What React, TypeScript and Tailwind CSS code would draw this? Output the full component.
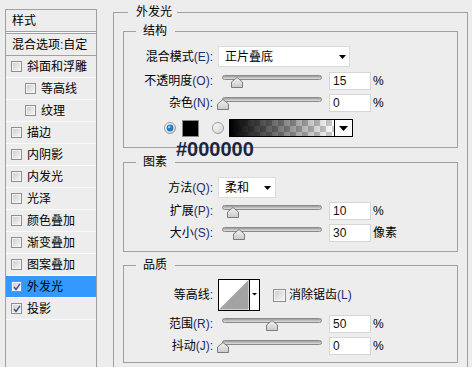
import React from "react";

function Check({ checked }: { checked?: boolean }) {
  return (
    <span className="relative flex h-[11px] w-[11px] shrink-0 border border-[#8f8f8f] bg-[#f4f4f4]">
      <span className="m-[1px] flex-1 bg-gradient-to-br from-[#cfcfcf] to-[#f4f4f4]" />
      {checked && (
        <svg className="absolute left-[1px] top-[1px]" width="8" height="8" viewBox="0 0 8 8">
          <path d="M1 3.8 L3 6.5 L7 0.8" fill="none" stroke="#3a4c9a" strokeWidth="1.4" />
        </svg>
      )}
    </span>
  );
}

function Thumb({ x }: { x: number }) {
  return (
    <svg className="absolute top-[5px]" style={{ left: x - 6 }} width="12" height="11" viewBox="0 0 12 11">
      <defs>
        <linearGradient id="tg" x1="0" y1="0" x2="0" y2="1">
          <stop offset="0" stopColor="#f4f4f4" />
          <stop offset="1" stopColor="#c9c9c9" />
        </linearGradient>
      </defs>
      <path d="M6 0.5 L11.5 5 V10.5 H0.5 V5 Z" fill="url(#tg)" stroke="#7c7c7c" />
    </svg>
  );
}

function Slider({ x }: { x: number }) {
  return (
    <div className="relative h-full w-[107px] shrink-0">
      <div className="ml-[4px] mt-[3px] h-[5px] w-[100px] rounded-full border border-[#8a8a8a] bg-gradient-to-b from-[#9c9c9c] to-[#e0e0e0]" />
      <Thumb x={x} />
    </div>
  );
}

function Input({ v }: { v: string }) {
  return (
    <div className="ml-[4px] flex h-[18px] w-[42px] shrink-0 items-center border border-[#d6d6d6] bg-white pl-[3px] text-[#111]">
      {v}
    </div>
  );
}

function Label({ cn, en }: { cn: string; en?: string }) {
  return (
    <div className="w-[89px] shrink-0 text-right text-black">
      {cn}
      <span className="text-[#1e2c70]">{en ? `(${en}):` : ":"}</span>
    </div>
  );
}

function Arrow() {
  return (
    <svg width="7" height="4" viewBox="0 0 7 4">
      <path d="M0 0 H7 L3.5 4 Z" fill="#000" />
    </svg>
  );
}

function SliderRow({ cn, en, x, v, unit, cls }: { cn: string; en: string; x: number; v: string; unit: string; cls: string }) {
  return (
    <div className={cls}>
      <Label cn={cn} en={en} />
      <div className="ml-[5px] flex h-full items-center">
        <Slider x={x} />
        <Input v={v} />
        <span className="ml-[2px]">{unit}</span>
      </div>
    </div>
  );
}

function Radio({ on }: { on?: boolean }) {
  return (
    <svg width="12" height="12" viewBox="0 0 12 12" className="shrink-0">
      <defs>
        <linearGradient id="rg" x1="0" y1="0" x2="1" y2="1">
          <stop offset="0" stopColor="#ffffff" />
          <stop offset="1" stopColor="#cfcfcf" />
        </linearGradient>
      </defs>
      <circle cx="6" cy="6" r="5.5" fill="url(#rg)" stroke="#9a9a9a" />
      {on && (
        <>
          <circle cx="6" cy="6" r="3.4" fill="#1f7cc4" />
          <circle cx="5.2" cy="5" r="1.3" fill="#8fd0ff" />
        </>
      )}
    </svg>
  );
}

function GradientBox() {
  return (
    <div className="ml-[5px] flex h-[18px] w-[124px] shrink-0 border border-black bg-white">
      <svg width="104" height="16" viewBox="0 0 104 16" className="shrink-0">
        <defs>
          <pattern id="cb" width="12" height="12" patternUnits="userSpaceOnUse">
            <rect width="12" height="12" fill="#ffffff" />
            <rect width="6" height="6" fill="#cccccc" />
            <rect x="6" y="6" width="6" height="6" fill="#cccccc" />
          </pattern>
          <linearGradient id="gg" x1="0" y1="0" x2="1" y2="0">
            <stop offset="0" stopColor="#000" stopOpacity="1" />
            <stop offset="1" stopColor="#000" stopOpacity="0" />
          </linearGradient>
        </defs>
        <rect width="104" height="16" fill="url(#cb)" />
        <rect width="104" height="16" fill="url(#gg)" />
      </svg>
      <div className="flex flex-1 items-center justify-center border-l border-black">
        <svg width="9" height="5" viewBox="0 0 9 5">
          <path d="M0 0 H9 L4.5 5 Z" fill="#000" />
        </svg>
      </div>
    </div>
  );
}

function Contour() {
  return (
    <svg width="42" height="32" viewBox="0 0 42 32" className="shrink-0">
      <rect x="0.5" y="0.5" width="41" height="31" fill="#fff" stroke="#000" />
      <path d="M1 30.5 L30.5 1 V30.5 Z" fill="#a3a3a3" />
      <path d="M31.5 0.5 V31.5" stroke="#000" />
      <path d="M34 14 H39 L36.5 16.5 Z" fill="#000" />
    </svg>
  );
}

const items: { t: string; indent?: boolean; checked?: boolean; sel?: boolean }[] = [
  { t: "斜面和浮雕" },
  { t: "等高线", indent: true },
  { t: "纹理", indent: true },
  { t: "描边" },
  { t: "内阴影" },
  { t: "内发光" },
  { t: "光泽" },
  { t: "颜色叠加" },
  { t: "渐变叠加" },
  { t: "图案叠加" },
  { t: "外发光", checked: true, sel: true },
  { t: "投影", checked: true },
];

export default function App() {
  return (
    <div className="relative flex h-[367px] w-[472px] overflow-hidden bg-[#ededed] font-['Liberation_Sans','Noto_Sans_CJK_SC',sans-serif] text-[12px] leading-[16px] text-black">
      {/* Left list */}
      <div className="ml-[5px] mt-[9px] h-[420px] w-[92px] shrink-0 border border-[#a0a0a0]">
        <div className="flex h-[22px] items-center border-b border-[#a0a0a0] pl-[6px]">样式</div>
        <div className="h-[1px] bg-[#fafafa]" />
        <div className="flex h-[23px] items-center border-y border-[#a0a0a0] pl-[6px]">
          混合选项<span className="text-[#1e2c70]">:</span>自定
        </div>
        {items.map((it) => (
          <div
            key={it.t}
            className={
              (it.sel ? "bg-[#3399ff] " : "") +
              (it.indent ? "pl-[19px] " : "pl-[5px] ") +
              "flex h-[22px] items-center border-b border-[#fafafa]"
            }
          >
            <Check checked={it.checked} />
            <span className="ml-[5px]">{it.t}</span>
          </div>
        ))}
      </div>

      {/* Right panel */}
      <fieldset className="ml-[16px] mt-[4px] h-[420px] w-[355px] min-w-0 shrink-0 border border-[#a0a0a0] px-[9px]">
        <legend className="ml-[5px] pl-[8px] pr-[5px] leading-[16px]">外发光</legend>

        {/* 结构 */}
        <fieldset className="mt-[3px] min-w-0 border border-[#a0a0a0] pb-[10px]">
          <legend className="ml-[12px] pl-[7px] pr-[8px] leading-[16px]">结构</legend>
          <div className="mt-[7px] flex h-[21px] items-center">
            <Label cn="混合模式" en="E" />
            <div className="ml-[5px] flex h-[21px] w-[132px] items-center justify-between border border-[#dcdcdc] bg-white pl-[6px] pr-[3px]">
              <span>正片叠底</span>
              <Arrow />
            </div>
          </div>
          <SliderRow cls="mt-[5px] flex h-[18px] items-center" cn="不透明度" en="O" x={19} v="15" unit="%" />
          <SliderRow cls="mt-[4px] flex h-[18px] items-center" cn="杂色" en="N" x={5} v="0" unit="%" />
          <div className="mt-[7px] flex h-[18px] items-center pl-[40px]">
            <Radio on />
            <div className="ml-[6px] h-[17px] w-[17px] shrink-0 border border-[#8a8a8a] bg-black" />
            <div className="ml-[13px]">
              <Radio />
            </div>
            <GradientBox />
          </div>
        </fieldset>

        {/* 图素 */}
        <fieldset className="mt-[6px] min-w-0 border border-[#a0a0a0] pb-[9px]">
          <legend className="ml-[12px] pl-[7px] pr-[8px] leading-[16px]">图素</legend>
          <div className="mt-[7px] flex h-[21px] items-center">
            <Label cn="方法" en="Q" />
            <div className="ml-[5px] flex h-[21px] w-[58px] items-center justify-between border border-[#dcdcdc] bg-white pl-[6px] pr-[4px]">
              <span>柔和</span>
              <Arrow />
            </div>
          </div>
          <SliderRow cls="mt-[4px] flex h-[18px] items-center" cn="扩展" en="P" x={15} v="10" unit="%" />
          <SliderRow cls="mt-[4px] flex h-[18px] items-center" cn="大小" en="S" x={21} v="30" unit="像素" />
        </fieldset>

        {/* 品质 */}
        <fieldset className="mt-[5px] min-w-0 border border-[#a0a0a0] pb-[7px]">
          <legend className="ml-[12px] pl-[7px] pr-[8px] leading-[16px]">品质</legend>
          <div className="mt-[6px] flex h-[32px] items-center">
            <Label cn="等高线" />
            <div className="ml-[5px] flex items-center">
              <Contour />
              <div className="ml-[13px] flex h-[13px] w-[13px] border border-[#8f8f8f] bg-[#f4f4f4]">
                <span className="m-[1px] flex-1 bg-gradient-to-br from-[#cfcfcf] to-[#f4f4f4]" />
              </div>
              <span className="ml-[3px]">
                消除锯齿<span className="text-[#1e2c70]">(L)</span>
              </span>
            </div>
          </div>
          <SliderRow cls="mt-[4px] flex h-[18px] items-center" cn="范围" en="R" x={54} v="50" unit="%" />
          <SliderRow cls="mt-[4px] flex h-[18px] items-center" cn="抖动" en="J" x={5} v="0" unit="%" />
        </fieldset>
      </fieldset>

      <div className="absolute left-[176px] top-[137px] font-['Liberation_Sans',sans-serif] text-[20px] font-bold leading-[24px] text-[#1d2542]">
        #000000
      </div>
    </div>
  );
}
